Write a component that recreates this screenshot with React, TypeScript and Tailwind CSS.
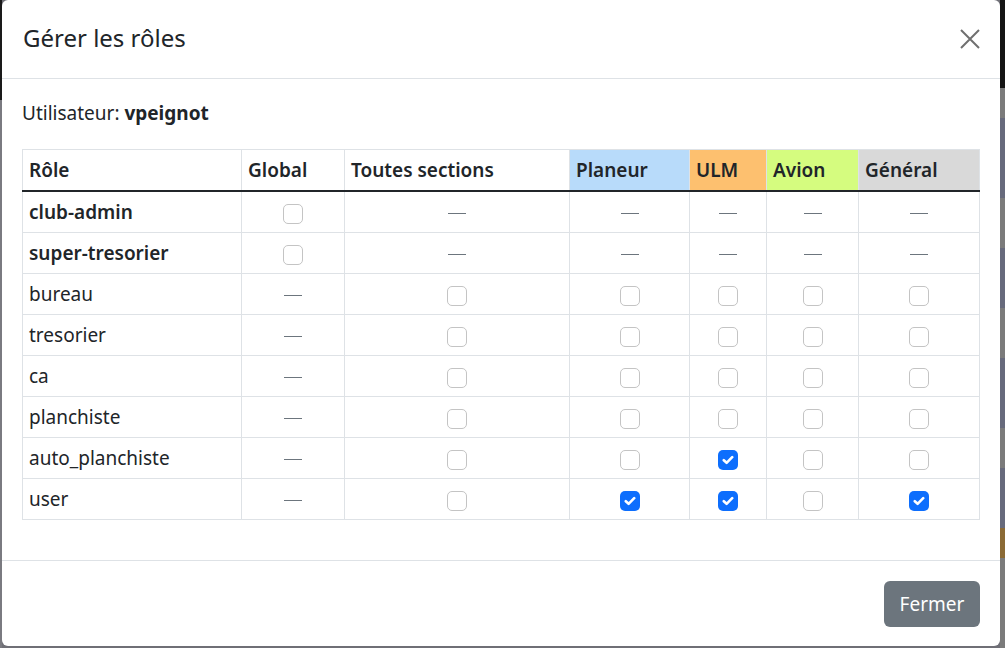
import React from 'react';

type Cell = 'dash' | 'off' | 'on';

interface Row {
  name: string;
  bold?: boolean;
  cells: Cell[];
}

const rows: Row[] = [
  { name: 'club-admin', bold: true, cells: ['off', 'dash', 'dash', 'dash', 'dash', 'dash'] },
  { name: 'super-tresorier', bold: true, cells: ['off', 'dash', 'dash', 'dash', 'dash', 'dash'] },
  { name: 'bureau', cells: ['dash', 'off', 'off', 'off', 'off', 'off'] },
  { name: 'tresorier', cells: ['dash', 'off', 'off', 'off', 'off', 'off'] },
  { name: 'ca', cells: ['dash', 'off', 'off', 'off', 'off', 'off'] },
  { name: 'planchiste', cells: ['dash', 'off', 'off', 'off', 'off', 'off'] },
  { name: 'auto_planchiste', cells: ['dash', 'off', 'off', 'on', 'off', 'off'] },
  { name: 'user', cells: ['dash', 'off', 'on', 'on', 'off', 'on'] },
];

const Check = ({ checked }: { checked: boolean }) =>
  checked ? (
    <span className="inline-flex w-[20px] h-[20px] rounded-[5px] bg-[#0d6efd] items-center justify-center align-middle">
      <svg width="12" height="10" viewBox="0 0 12 10">
        <path d="M1.8 5.2 L4.6 7.8 L10.2 2.2" stroke="#fff" strokeWidth="2.6" fill="none" strokeLinecap="round" strokeLinejoin="round" />
      </svg>
    </span>
  ) : (
    <span className="inline-block w-[20px] h-[20px] rounded-[5px] border border-[#c4c4c4] bg-white align-middle" />
  );

const Dash = () => <span className="inline-block w-[18px] h-px bg-[#6c757d] align-middle" />;

const th = 'px-[6px] py-[8px] border border-[#dee2e6] border-b-2 border-b-[#212529] font-semibold text-left';

export default function App() {
  return (
    <div
      className="w-[1005px] h-[648px] flex bg-[#6f6f76] text-[#212529] overflow-hidden"
      style={{ fontFamily: '"Noto Sans", "Open Sans", sans-serif' }}
    >
      <div className="w-[2px] flex flex-col">
        <div className="h-[100px] bg-[#1a1a1a]" />
        <div className="flex-1 bg-[#7a7a80]" />
      </div>
      <div className="w-[998px] h-[646px] bg-white rounded-md flex flex-col">
        <div className="h-[79px] flex items-center justify-between px-[21px] border-b border-[#dee2e6]">
          <h5 className="text-[24px] font-normal leading-[30px] -mt-[2px]">Gérer les rôles</h5>
          <svg width="22" height="22" viewBox="0 0 22 22" className="mr-[-2px]">
            <path d="M2 2 L20 20 M20 2 L2 20" stroke="#6f6f6f" strokeWidth="2" />
          </svg>
        </div>

        <div className="px-[20px] pt-[22px] h-[482px] border-b border-[#dee2e6]">
          <p className="text-[19px] leading-[24px] mb-[24px]">
            Utilisateur: <span className="font-bold">vpeignot</span>
          </p>
          <table className="table-fixed w-[957px] border-collapse text-[19px] leading-[24px]">
            <colgroup>
              <col className="w-[219px]" />
              <col className="w-[103px]" />
              <col className="w-[225px]" />
              <col className="w-[120px]" />
              <col className="w-[77px]" />
              <col className="w-[92px]" />
              <col className="w-[121px]" />
            </colgroup>
            <thead>
              <tr>
                <th className={th}>Rôle</th>
                <th className={th}>Global</th>
                <th className={th}>Toutes sections</th>
                <th className={`${th} bg-[#b8dbfa]`}>Planeur</th>
                <th className={`${th} bg-[#fdc06f]`}>ULM</th>
                <th className={`${th} bg-[#d5fc7f]`}>Avion</th>
                <th className={`${th} bg-[#d9d9d9]`}>Général</th>
              </tr>
            </thead>
            <tbody>
              {rows.map((r) => (
                <tr key={r.name} className="h-[40px]">
                  <td className={`px-[6px] py-[8px] border border-[#dee2e6] ${r.bold ? 'font-semibold' : ''}`}>{r.name}</td>
                  {r.cells.map((c, i) => (
                    <td key={i} className="py-[8px] border border-[#dee2e6] text-center">
                      {c === 'dash' ? <Dash /> : <Check checked={c === 'on'} />}
                    </td>
                  ))}
                </tr>
              ))}
            </tbody>
          </table>
        </div>

        <div className="flex-1 flex items-start justify-end px-[20px] pt-[20px]">
          <button className="h-[46px] w-[96px] rounded-[6px] bg-[#6c757d] text-white text-[19px] leading-[30px]">
            Fermer
          </button>
        </div>
      </div>
      <div className="w-[5px] flex flex-col">
        <div className="h-[88px] bg-[#141414]" />
        <div className="h-[30px] bg-[#7b7b7b]" />
        <div className="h-[80px] bg-[#676a7c]" />
        <div className="h-[50px] bg-[#7b7b7b]" />
        <div className="h-[60px] bg-[#676a7c]" />
        <div className="h-[50px] bg-[#7b7b7b]" />
        <div className="h-[70px] bg-[#676a7c]" />
        <div className="h-[40px] bg-[#7b7b7b]" />
        <div className="h-[60px] bg-[#676a7c]" />
        <div className="h-[30px] bg-[#8b6a35]" />
        <div className="flex-1 bg-[#7b7b7b]" />
      </div>
    </div>
  );
}
